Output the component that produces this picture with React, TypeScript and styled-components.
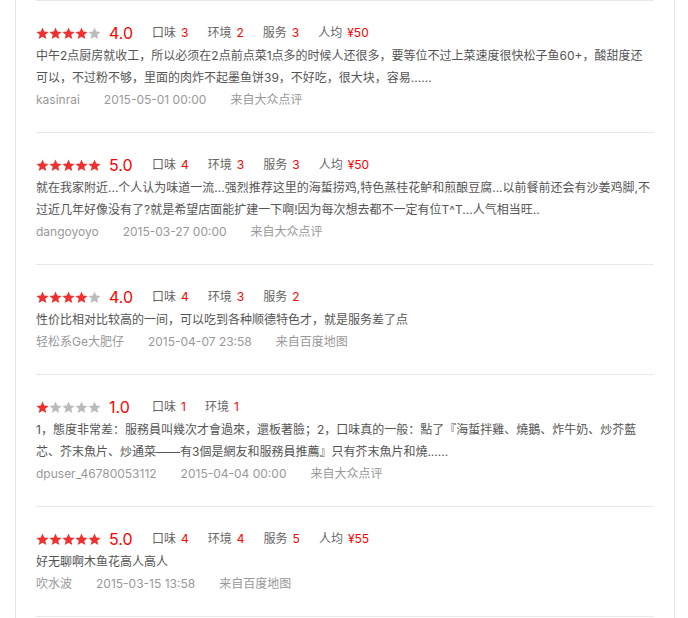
import React from 'react';
import styled, { createGlobalStyle } from 'styled-components';

type Review = {
    stars: number;
    score: string;
    subs: Array<{ label: string; value: string }>;
    text: string;
    user: string;
    time: string;
    source: string;
};

const reviews: Array<Review> = [
    {
        stars: 4,
        score: '4.0',
        subs: [
            { label: '口味', value: '3' },
            { label: '环境', value: '2' },
            { label: '服务', value: '3' },
            { label: '人均', value: '¥50' },
        ],
        text: '中午2点厨房就收工，所以必须在2点前点菜1点多的时候人还很多，要等位不过上菜速度很快松子鱼60+，酸甜度还可以，不过粉不够，里面的肉炸不起墨鱼饼39，不好吃，很大块，容易......',
        user: 'kasinrai',
        time: '2015-05-01 00:00',
        source: '来自大众点评',
    },
    {
        stars: 5,
        score: '5.0',
        subs: [
            { label: '口味', value: '4' },
            { label: '环境', value: '3' },
            { label: '服务', value: '3' },
            { label: '人均', value: '¥50' },
        ],
        text: '就在我家附近...个人认为味道一流...强烈推荐这里的海蜇捞鸡,特色蒸桂花鲈和煎酿豆腐...以前餐前还会有沙姜鸡脚,不过近几年好像没有了?就是希望店面能扩建一下啊!因为每次想去都不一定有位T^T...人气相当旺..',
        user: 'dangoyoyo',
        time: '2015-03-27 00:00',
        source: '来自大众点评',
    },
    {
        stars: 4,
        score: '4.0',
        subs: [
            { label: '口味', value: '4' },
            { label: '环境', value: '3' },
            { label: '服务', value: '2' },
        ],
        text: '性价比相对比较高的一间，可以吃到各种顺德特色才，就是服务差了点',
        user: '轻松系Ge大肥仔',
        time: '2015-04-07 23:58',
        source: '来自百度地图',
    },
    {
        stars: 1,
        score: '1.0',
        subs: [
            { label: '口味', value: '1' },
            { label: '环境', value: '1' },
        ],
        text: '1，態度非常差：服務員叫幾次才會過來，還板著臉；2，口味真的一般：點了『海蜇拌雞、燒鵝、炸牛奶、炒芥藍芯、芥末魚片、炒通菜——有3個是網友和服務員推薦』只有芥末魚片和燒......',
        user: 'dpuser_46780053112',
        time: '2015-04-04 00:00',
        source: '来自大众点评',
    },
    {
        stars: 5,
        score: '5.0',
        subs: [
            { label: '口味', value: '4' },
            { label: '环境', value: '4' },
            { label: '服务', value: '5' },
            { label: '人均', value: '¥55' },
        ],
        text: '好无聊啊木鱼花高人高人',
        user: '吹水波',
        time: '2015-03-15 13:58',
        source: '来自百度地图',
    },
];

const GlobalStyle = createGlobalStyle`
    body {
        margin: 0;
        background: #fff;
        font-family: Inter, "Noto Sans CJK SC", sans-serif;
    }
`;

const Panel = styled.div`
    margin-left: 15px;
    width: 618px;
    min-height: 618px;
    padding: 0 20px;
    border-left: 1px solid #e6e6e6;
    border-right: 1px solid #e6e6e6;
`;

const Item = styled.div`
    padding: 21px 0;
    border-top: 1px solid #e8e8e8;
    &:last-child {
        border-bottom: 1px solid #e8e8e8;
    }
`;

const RatingRow = styled.div`
    display: flex;
    align-items: center;
    height: 22px;
`;

const Stars = styled.div`
    display: flex;
    width: 65px;
`;

const Score = styled.span`
    width: 43px;
    margin-left: 8px;
    font-size: 16px;
    line-height: 22px;
    color: #f00;
`;

const Subs = styled.div`
    display: flex;
    gap: 19px;
    font-size: 12px;
    line-height: 22px;
    color: #666;
`;

const Num = styled.span`
    margin-left: 5px;
    color: #f00;
`;

const Text = styled.p`
    margin: 0;
    padding-top: 1px;
    font-size: 12px;
    line-height: 22px;
    color: #555;
`;

const Meta = styled.div`
    display: flex;
    gap: 24px;
    font-size: 12px;
    line-height: 22px;
    color: #999;
`;

const Star: React.FC<{ on: boolean }> = ({ on }) => (
    <svg width="13" height="13" viewBox="0 0 24 24">
        <path
            d="M12 1l3.2 7.4 8 .7-6.1 5.3 1.9 7.8L12 18.1 5 22.2l1.9-7.8L.8 9.1l8-.7z"
            fill={on ? '#f0302f' : '#bbb'}
        />
    </svg>
);

export default function App() {
    return (
        <>
            <GlobalStyle />
            <Panel>
                {reviews.map((r, index) => (
                    <Item key={`${r.user}-${index}`}>
                        <RatingRow>
                            <Stars>
                                {[0, 1, 2, 3, 4].map((i) => (
                                    <Star key={i} on={i < r.stars} />
                                ))}
                            </Stars>
                            <Score>{r.score}</Score>
                            <Subs>
                                {r.subs.map((s) => (
                                    <span key={s.label}>
                                        {s.label}
                                        <Num>{s.value}</Num>
                                    </span>
                                ))}
                            </Subs>
                        </RatingRow>
                        <Text>{r.text}</Text>
                        <Meta>
                            <span>{r.user}</span>
                            <span>{r.time}</span>
                            <span>{r.source}</span>
                        </Meta>
                    </Item>
                ))}
            </Panel>
        </>
    );
}
